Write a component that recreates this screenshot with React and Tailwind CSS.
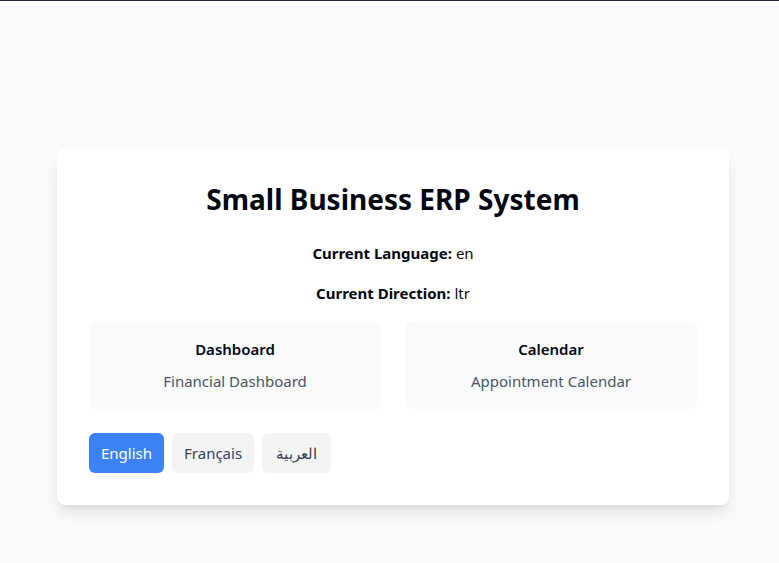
import React, { useState } from "react";

const labels = {
  en: { dashboard: "Dashboard", dashSub: "Financial Dashboard", calendar: "Calendar", calSub: "Appointment Calendar" },
};

const App = () => {
  const [lang, setLang] = useState("en");
  const t = labels.en;

  return (
    <div className="min-h-screen bg-[#f8fafc] font-['Noto_Sans',sans-serif] text-[15px] text-[#030712]">
      <div className="h-px bg-[#1e293b]"></div>
      <div className="pt-[148px] pl-[7px] flex justify-center">
        <div className="w-[672px] bg-white rounded-lg shadow-lg p-8">
          <h1 className="text-[28px] leading-9 font-bold text-center mb-6">Small Business ERP System</h1>
          <p className="text-center leading-6 mb-4">
            <span className="font-bold">Current Language:</span> {lang}
          </p>
          <p className="text-center leading-6 mb-4">
            <span className="font-bold">Current Direction:</span> ltr
          </p>

          <div className="grid grid-cols-2 gap-6 mb-6">
            <div className="bg-[#f9fafb] rounded-lg p-4 text-center">
              <h2 className="font-semibold leading-6">{t.dashboard}</h2>
              <p className="mt-2 leading-6 text-[#4b5563]">{t.dashSub}</p>
            </div>
            <div className="bg-[#f9fafb] rounded-lg p-4 text-center">
              <h2 className="font-semibold leading-6">{t.calendar}</h2>
              <p className="mt-2 leading-6 text-[#4b5563]">{t.calSub}</p>
            </div>
          </div>

          {/* language switcher */}
          <div className="flex gap-2">
            <button onClick={() => setLang("en")} className={`px-3 py-2 leading-6 rounded-md ${lang === "en" ? "bg-[#3b82f6] text-white" : "bg-[#f3f4f6] text-[#374151]"}`}>
              English
            </button>
            <button onClick={() => setLang("fr")} className={`px-3 py-2 leading-6 rounded-md ${lang === "fr" ? "bg-[#3b82f6] text-white" : "bg-[#f3f4f6] text-[#374151]"}`}>
              Français
            </button>
            <button onClick={() => setLang("ar")} className={`px-3.5 py-2 leading-6 rounded-md ${lang === "ar" ? "bg-[#3b82f6] text-white" : "bg-[#f3f4f6] text-[#374151]"}`}>
              العربية
            </button>
          </div>
        </div>
      </div>
    </div>
  );
};

export default App;
